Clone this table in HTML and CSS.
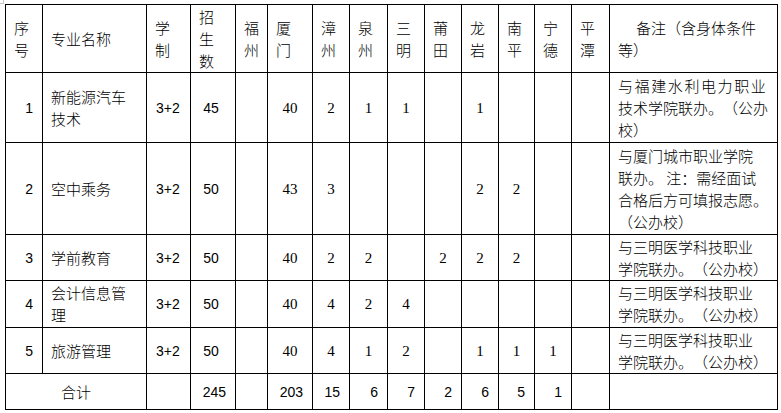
FILE: index.html
```html
<!DOCTYPE html>
<html lang="zh">
<head>
<meta charset="utf-8">
<title>专业招生计划</title>
<link rel="stylesheet" href="styles.css">
</head>
<body>
<div class="page">
  <span class="mark-corner"></span>
  <table class="plan">
    <colgroup>
      <col class="c-no"><col class="c-name"><col class="c-sys"><col class="c-num">
      <col class="c-fz"><col class="c-xm"><col class="c-zz"><col class="c-qz">
      <col class="c-sm"><col class="c-pt"><col class="c-ly"><col class="c-np">
      <col class="c-nd"><col class="c-ptan"><col class="c-note">
    </colgroup>
    <tr class="r-head">
      <td>序<br>号</td>
      <td>专业名称</td>
      <td>学<br>制</td>
      <td>招<br>生<br>数</td>
      <td>福<br>州</td>
      <td>厦<br>门</td>
      <td>漳<br>州</td>
      <td>泉<br>州</td>
      <td>三<br>明</td>
      <td>莆<br>田</td>
      <td>龙<br>岩</td>
      <td>南<br>平</td>
      <td>宁<br>德</td>
      <td>平<br>潭</td>
      <td><span class="ln indent">备注（含身体条件</span><span class="ln">等）</span></td>
    </tr>
    <tr class="r-1">
      <td class="idx">1</td>
      <td>新能源汽车<br>技术</td>
      <td class="sys">3+2</td>
      <td class="cnt">45</td>
      <td></td>
      <td class="n">40</td>
      <td class="n">2</td>
      <td class="n">1</td>
      <td class="n">1</td>
      <td></td>
      <td class="n">1</td>
      <td></td>
      <td></td>
      <td></td>
      <td><span class="ln wide">与福建水利电力职业</span><span class="ln">技术学院联办。（公办</span><span class="ln">校）</span></td>
    </tr>
    <tr class="r-2">
      <td class="idx">2</td>
      <td>空中乘务</td>
      <td class="sys">3+2</td>
      <td class="cnt">50</td>
      <td></td>
      <td class="n">43</td>
      <td class="n">3</td>
      <td></td>
      <td></td>
      <td></td>
      <td class="n">2</td>
      <td class="n">2</td>
      <td></td>
      <td></td>
      <td><span class="ln">与厦门城市职业学院</span><span class="ln">联办。 注：需经面试</span><span class="ln">合格后方可填报志愿。</span><span class="ln">（公办校）</span></td>
    </tr>
    <tr class="r-3">
      <td class="idx">3</td>
      <td>学前教育</td>
      <td class="sys">3+2</td>
      <td class="cnt">50</td>
      <td></td>
      <td class="n">40</td>
      <td class="n">2</td>
      <td class="n">2</td>
      <td></td>
      <td class="n">2</td>
      <td class="n">2</td>
      <td class="n">2</td>
      <td></td>
      <td></td>
      <td><span class="ln">与三明医学科技职业</span><span class="ln">学院联办。（公办校）</span></td>
    </tr>
    <tr class="r-4">
      <td class="idx">4</td>
      <td>会计信息管<br>理</td>
      <td class="sys">3+2</td>
      <td class="cnt">50</td>
      <td></td>
      <td class="n">40</td>
      <td class="n">4</td>
      <td class="n">2</td>
      <td class="n">4</td>
      <td></td>
      <td></td>
      <td></td>
      <td></td>
      <td></td>
      <td><span class="ln">与三明医学科技职业</span><span class="ln">学院联办。（公办校）</span></td>
    </tr>
    <tr class="r-5">
      <td class="idx">5</td>
      <td>旅游管理</td>
      <td class="sys">3+2</td>
      <td class="cnt">50</td>
      <td></td>
      <td class="n">40</td>
      <td class="n">4</td>
      <td class="n">1</td>
      <td class="n">2</td>
      <td></td>
      <td class="n">1</td>
      <td class="n">1</td>
      <td class="n">1</td>
      <td></td>
      <td><span class="ln">与三明医学科技职业</span><span class="ln">学院联办。（公办校）</span></td>
    </tr>
    <tr class="r-sum">
      <td colspan="2" class="sum-label">合计</td>
      <td></td>
      <td class="tot">245</td>
      <td></td>
      <td class="tot">203</td>
      <td class="tot">15</td>
      <td class="tot">6</td>
      <td class="tot">7</td>
      <td class="tot">2</td>
      <td class="tot">6</td>
      <td class="tot">5</td>
      <td class="tot">1</td>
      <td></td>
      <td></td>
    </tr>
  </table>
  <span class="mark-bottom"></span>
</div>
</body>
</html>
```

FILE: styles.css
```css
html, body {
  margin: 0;
  padding: 0;
  background: #ffffff;
}

body {
  font-family: "Noto Sans CJK SC", "Noto Sans CJK TC", sans-serif;
  font-size: 15px;
  font-weight: 300;
  color: #000000;
  text-spacing-trim: space-all;
  font-kerning: none;
}

.page {
  position: relative;
  padding: 4px 0 0 5px;
}

.plan {
  border-collapse: collapse;
  table-layout: fixed;
  width: 773px;
}

.plan td {
  border: 1px solid #000000;
  padding: 0 0 0 8px;
  vertical-align: middle;
  line-height: 22px;
  white-space: nowrap;
  overflow: hidden;
  text-align: left;
}

.c-no { width: 37px; }
.c-name { width: 104px; }
.c-sys { width: 44px; }
.c-num { width: 45px; }
.c-fz { width: 32px; }
.c-xm { width: 45px; }
.c-zz { width: 37px; }
.c-qz { width: 38px; }
.c-sm { width: 37px; }
.c-pt { width: 37px; }
.c-ly { width: 37px; }
.c-np { width: 36px; }
.c-nd { width: 37px; }
.c-ptan { width: 38px; }
.c-note { width: 168px; }

.r-head td { height: 67px; }
.r-1 td { height: 69px; }
.r-2 td { height: 91px; }
.r-3 td { height: 45px; }
.r-4 td { height: 46px; }
.r-5 td { height: 45px; }
.r-sum td { height: 35px; }

.ln {
  display: block;
}

.indent {
  text-indent: 18px;
}

.wide {
  letter-spacing: 1.6px;
}

.plan td.idx {
  font-family: "Liberation Sans", sans-serif;
  font-weight: 400;
  font-size: 14px;
  text-align: right;
  padding: 0 9px 0 0;
}

.plan td.sys {
  font-family: "Liberation Sans", sans-serif;
  font-weight: 400;
  font-size: 14px;
  padding-left: 9px;
}

.plan td.cnt {
  font-family: "Liberation Sans", sans-serif;
  font-weight: 400;
  font-size: 14px;
  text-align: center;
  padding: 0 4px 0 0;
}

.plan td.n {
  font-family: "Liberation Serif", serif;
  font-weight: 400;
  font-size: 15px;
  text-align: center;
  padding: 0;
}

.plan td.tot {
  font-family: "Liberation Sans", sans-serif;
  font-weight: 400;
  font-size: 14px;
  text-align: right;
  padding: 0 9px 0 0;
}

.plan td.sum-label {
  text-align: center;
  padding: 0;
}

.mark-corner {
  position: absolute;
  left: 0;
  top: 0;
  width: 3px;
  height: 3px;
  border-right: 1px solid #c8c8c8;
  border-bottom: 1px solid #c8c8c8;
}

.mark-bottom {
  position: absolute;
  left: 373px;
  top: 410px;
  width: 33px;
  height: 3px;
  border-left: 1px solid #c8c8c8;
  border-right: 1px solid #c8c8c8;
  border-top: 1px solid #c8c8c8;
}
```
